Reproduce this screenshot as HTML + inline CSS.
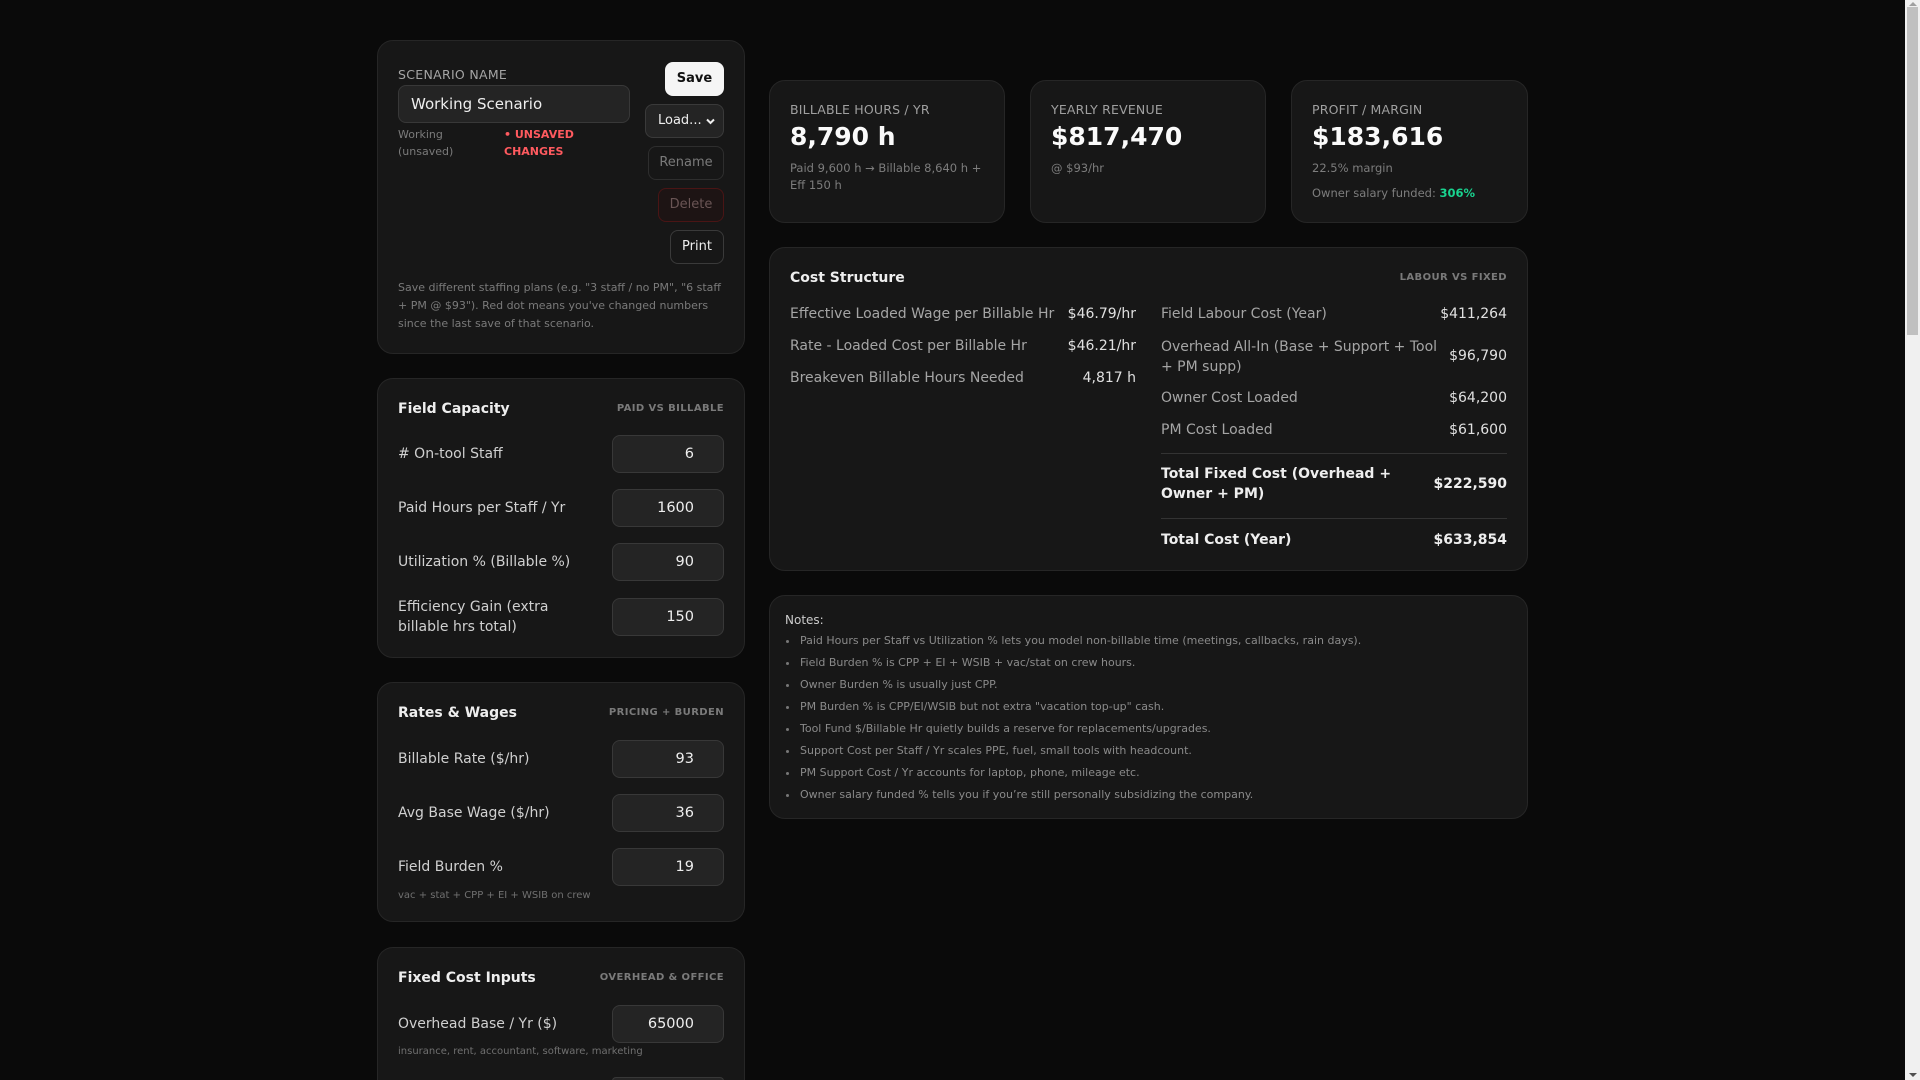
<!DOCTYPE html>
<html><head><meta charset="utf-8"><style>
*{box-sizing:border-box;margin:0;padding:0}
html,body{width:1920px;height:1080px;overflow:hidden;background:#0a0a0a;font-family:"DejaVu Sans","Liberation Sans",sans-serif;color:#e6e6e6}
#wrap{position:relative;width:1920px;height:1080px;overflow:hidden}
.card{position:absolute;background:#171717;border:1px solid #262626;border-radius:16px}
.abs{position:absolute;white-space:nowrap}
.lbl{font-size:14px;color:#d0d0d0}
.inp{position:absolute;left:234px;width:112px;height:38px;background:#242424;border:1px solid #383838;border-radius:8px;font-size:14.5px;color:#eee;text-align:right;padding-right:29px;line-height:36px}
.ttl{font-size:14px;font-weight:bold;color:#eee}
.tag{font-size:10px;font-weight:bold;color:#7a7a7a;letter-spacing:.4px}
.hint{font-size:10px;color:#707070}
.btn{position:absolute;border-radius:8px;font-size:13px;text-align:center}
.sl{font-size:12.5px;color:#a0a0a0;letter-spacing:.2px}
.sv{font-size:25px;font-weight:bold;color:#fafafa}
.ss{font-size:11.5px;color:#7d7d7d;line-height:17px}
.cl{font-size:14px;color:#a5a5a5}
.cv{font-size:14px;color:#e0e0e0;text-align:right}
ul{list-style:none}
li{font-size:11px;color:#8a8a8a;height:22px;position:relative;padding-left:15px}
li:before{content:"";position:absolute;left:1px;top:6px;width:3px;height:3px;background:#777;border-radius:50%}
</style></head><body><div id="wrap">

<div class="card" style="left:377px;top:40px;width:368px;height:314px">
  <div class="abs" style="left:20px;top:26px;font-size:12.5px;color:#a5a5a5;letter-spacing:.3px">SCENARIO NAME</div>
  <div class="abs" style="left:20px;top:44px;width:232px;height:38px;background:#242424;border:1px solid #383838;border-radius:8px;font-size:15px;color:#eee;line-height:36px;padding-left:12px">Working Scenario</div>
  <div class="abs" style="left:20px;top:85px;font-size:11px;color:#7a7a7a;line-height:17px;white-space:normal;width:70px">Working (unsaved)</div>
  <div class="abs" style="left:126px;top:85px;font-size:11px;color:#ff5a5f;font-weight:bold;line-height:17px;white-space:normal;width:90px">• UNSAVED CHANGES</div>
  <div class="btn" style="left:287px;top:21px;width:59px;height:34px;background:#f5f5f5;color:#111;font-weight:bold;line-height:34px">Save</div>
  <div class="btn" style="left:267px;top:63px;width:79px;height:34px;background:#242424;border:1px solid #3a3a3a;color:#eee;line-height:32px;text-align:left;padding-left:12px">Load...<svg style="position:absolute;right:8px;top:13px" width="9" height="7" viewBox="0 0 9 7"><path d="M1 1.5L4.5 5L8 1.5" stroke="#eee" stroke-width="2" fill="none"/></svg></div>
  <div class="btn" style="left:270px;top:105px;width:76px;height:34px;border:1px solid #2e2e2e;color:#7a7a7a;line-height:32px">Rename</div>
  <div class="btn" style="left:280px;top:147px;width:66px;height:34px;border:1px solid #4a1515;background:#1d1414;color:#6a5555;line-height:32px">Delete</div>
  <div class="btn" style="left:292px;top:189px;width:54px;height:34px;border:1px solid #3a3a3a;color:#eee;line-height:32px">Print</div>
  <div class="abs" style="left:20px;top:238px;width:328px;white-space:normal;font-size:11px;color:#7a7a7a;line-height:18px">Save different staffing plans (e.g. "3 staff / no PM", "6 staff + PM @ $93"). Red dot means you've changed numbers since the last save of that scenario.</div>
</div>

<div class="card" style="left:377px;top:378px;width:368px;height:280px">
  <div class="abs ttl" style="left:20px;top:22px">Field Capacity</div>
  <div class="abs tag" style="right:20px;top:24px">PAID VS BILLABLE</div>
  <div class="abs lbl" style="left:20px;top:67px">#&nbsp;On-tool Staff</div><div class="inp" style="top:56px">6</div>
  <div class="abs lbl" style="left:20px;top:121px">Paid Hours per Staff / Yr</div><div class="inp" style="top:110px">1600</div>
  <div class="abs lbl" style="left:20px;top:175px">Utilization % (Billable %)</div><div class="inp" style="top:164px">90</div>
  <div class="abs lbl" style="left:20px;top:218px;line-height:20px;white-space:normal;width:170px">Efficiency Gain (extra billable hrs total)</div><div class="inp" style="top:219px">150</div>
</div>

<div class="card" style="left:377px;top:682px;width:368px;height:240px">
  <div class="abs ttl" style="left:20px;top:22px">Rates &amp; Wages</div>
  <div class="abs tag" style="right:20px;top:24px">PRICING + BURDEN</div>
  <div class="abs lbl" style="left:20px;top:68px">Billable Rate ($/hr)</div><div class="inp" style="top:57px">93</div>
  <div class="abs lbl" style="left:20px;top:122px">Avg Base Wage ($/hr)</div><div class="inp" style="top:111px">36</div>
  <div class="abs lbl" style="left:20px;top:176px">Field Burden %</div><div class="inp" style="top:165px">19</div>
  <div class="abs hint" style="left:20px;top:207px">vac + stat + CPP + EI + WSIB on crew</div>
</div>

<div class="card" style="left:377px;top:947px;width:368px;height:133px;border-bottom:none;border-bottom-left-radius:0;border-bottom-right-radius:0">
  <div class="abs ttl" style="left:20px;top:22px">Fixed Cost Inputs</div>
  <div class="abs tag" style="right:20px;top:24px">OVERHEAD &amp; OFFICE</div>
  <div class="abs lbl" style="left:20px;top:68px">Overhead Base / Yr ($)</div><div class="inp" style="top:57px">65000</div>
  <div class="abs hint" style="left:20px;top:98px">insurance, rent, accountant, software, marketing</div>
  <div class="inp" style="top:129px;height:4px;border-bottom:none;border-radius:8px 8px 0 0"></div>
</div>

<div class="card" style="left:769px;top:80px;width:236px;height:143px">
  <div class="abs sl" style="left:20px;top:21px">BILLABLE HOURS / YR</div>
  <div class="abs sv" style="left:20px;top:41px">8,790 h</div>
  <div class="abs ss" style="left:20px;top:79px;white-space:normal;width:195px">Paid 9,600 h → Billable 8,640 h + Eff 150 h</div>
</div>
<div class="card" style="left:1030px;top:80px;width:236px;height:143px">
  <div class="abs sl" style="left:20px;top:21px">YEARLY REVENUE</div>
  <div class="abs sv" style="left:20px;top:41px">$817,470</div>
  <div class="abs ss" style="left:20px;top:79px">@ $93/hr</div>
</div>
<div class="card" style="left:1291px;top:80px;width:237px;height:143px">
  <div class="abs sl" style="left:20px;top:21px">PROFIT / MARGIN</div>
  <div class="abs sv" style="left:20px;top:41px">$183,616</div>
  <div class="abs ss" style="left:20px;top:79px">22.5% margin</div>
  <div class="abs ss" style="left:20px;top:104px">Owner salary funded: <b style="color:#19d38f">306%</b></div>
</div>

<div class="card" style="left:769px;top:247px;width:759px;height:324px">
  <div class="abs ttl" style="left:20px;top:22px">Cost Structure</div>
  <div class="abs tag" style="right:20px;top:24px">LABOUR VS FIXED</div>
  <div class="abs cl" style="left:20px;top:58px">Effective Loaded Wage per Billable Hr</div><div class="abs cv" style="right:391px;top:58px">$46.79/hr</div>
  <div class="abs cl" style="left:20px;top:90px">Rate - Loaded Cost per Billable Hr</div><div class="abs cv" style="right:391px;top:90px">$46.21/hr</div>
  <div class="abs cl" style="left:20px;top:122px">Breakeven Billable Hours Needed</div><div class="abs cv" style="right:391px;top:122px">4,817 h</div>

  <div class="abs cl" style="left:391px;top:58px">Field Labour Cost (Year)</div><div class="abs cv" style="right:20px;top:58px">$411,264</div>
  <div class="abs cl" style="left:391px;top:89px;white-space:normal;width:280px;line-height:20px">Overhead All-In (Base + Support + Tool + PM supp)</div><div class="abs cv" style="right:20px;top:100px">$96,790</div>
  <div class="abs cl" style="left:391px;top:142px">Owner Cost Loaded</div><div class="abs cv" style="right:20px;top:142px">$64,200</div>
  <div class="abs cl" style="left:391px;top:174px">PM Cost Loaded</div><div class="abs cv" style="right:20px;top:174px">$61,600</div>
  <div class="abs" style="left:391px;right:20px;top:205px;border-top:1px solid #333"></div>
  <div class="abs" style="left:391px;top:216px;font-size:14px;font-weight:bold;color:#eee;white-space:normal;width:245px;line-height:20px">Total Fixed Cost (Overhead + Owner + PM)</div><div class="abs" style="right:20px;top:228px;font-size:14px;font-weight:bold;color:#eee">$222,590</div>
  <div class="abs" style="left:391px;right:20px;top:270px;border-top:1px solid #333"></div>
  <div class="abs" style="left:391px;top:284px;font-size:14px;font-weight:bold;color:#eee">Total Cost (Year)</div><div class="abs" style="right:20px;top:284px;font-size:14px;font-weight:bold;color:#eee">$633,854</div>
</div>

<div class="card" style="left:769px;top:595px;width:759px;height:224px">
  <div class="abs" style="left:15px;top:17px;font-size:12px;color:#ccc">Notes:</div>
  <ul class="abs" style="left:15px;top:38px">
    <li>Paid Hours per Staff vs Utilization % lets you model non-billable time (meetings, callbacks, rain days).</li>
    <li>Field Burden % is CPP + EI + WSIB + vac/stat on crew hours.</li>
    <li>Owner Burden % is usually just CPP.</li>
    <li>PM Burden % is CPP/EI/WSIB but not extra "vacation top-up" cash.</li>
    <li>Tool Fund $/Billable Hr quietly builds a reserve for replacements/upgrades.</li>
    <li>Support Cost per Staff / Yr scales PPE, fuel, small tools with headcount.</li>
    <li>PM Support Cost / Yr accounts for laptop, phone, mileage etc.</li>
    <li>Owner salary funded % tells you if you’re still personally subsidizing the company.</li>
  </ul>
</div>

<div class="abs" style="left:1905px;top:0;width:15px;height:1080px;background:#f0f0f0"></div>
<div class="abs" style="left:1907px;top:7px;width:11px;height:328px;background:#c0c0c0"></div>
<div class="abs" style="left:1909px;top:2px;width:0;height:0;border-left:4px solid transparent;border-right:4px solid transparent;border-bottom:4px solid #a0a0a0"></div>
<div class="abs" style="left:1909px;top:1073px;width:0;height:0;border-left:4px solid transparent;border-right:4px solid transparent;border-top:4px solid #505050"></div>
</div></body></html>
